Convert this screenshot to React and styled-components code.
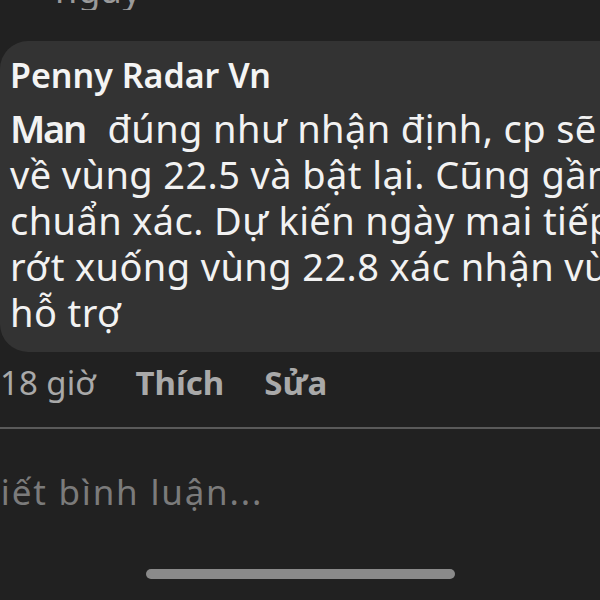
import React from "react";
import styled, { createGlobalStyle } from "styled-components";

const Global = createGlobalStyle`
  html, body { margin: 0; padding: 0; background: #212121; }
  body { width: 600px; height: 600px; overflow: hidden; font-family: "Noto Sans", "DejaVu Sans", sans-serif; }
`;

const Screen = styled.div`
  width: 600px;
  height: 600px;
  overflow: hidden;
  background: #212121;
  display: flex;
  flex-direction: column;
`;

const TopFragment = styled.div`
  height: 10px;
  overflow: hidden;
  margin-bottom: 31px;
`;

const TopText = styled.div`
  font-size: 36px;
  line-height: 40px;
  color: #9a9a9a;
  margin-top: -30px;
  padding-left: 34px;
  letter-spacing: 1px;
  white-space: pre;
`;

const Bubble = styled.div`
  background: #333333;
  border-radius: 28px 0 0 28px;
  padding: 9px 0 17px 10px;
  overflow: hidden;
  margin-right: -200px;
`;

const Name = styled.div`
  font-size: 34px;
  line-height: 59px;
  font-weight: 600;
  color: #f4f4f4;
  margin-top: -4px;
`;

const Line = styled.div`
  font-size: 38px;
  line-height: 46px;
  letter-spacing: 0.4px;
  color: #f2f2f2;
  white-space: pre;
`;

const Strong = styled.span`
  font-weight: 600;
  letter-spacing: -2.3px;
  margin-right: 2px;
`;

const Meta = styled.div`
  display: flex;
  align-items: baseline;
  gap: 40px;
  font-size: 33px;
  line-height: 40px;
  color: #a9a9a9;
  margin-top: 11px;
`;

const Action = styled.span`
  font-weight: 700;
`;

const Divider = styled.div`
  height: 2px;
  background: #5a5a5a;
  margin-top: 24px;
`;

const Placeholder = styled.div`
  font-size: 35px;
  line-height: 40px;
  letter-spacing: 1.8px;
  color: #7b7b7b;
  margin-top: 43px;
  margin-left: -22px;
  white-space: nowrap;
`;

const HomeBar = styled.div`
  width: 309px;
  height: 10px;
  border-radius: 5px;
  background: #8a8a8a;
  align-self: center;
  margin-top: 57px;
`;

export default function App() {
  return (
    <>
      <Global />
      <Screen>
        <TopFragment>
          <TopText>· ngày</TopText>
        </TopFragment>
        <Bubble>
          <Name>Penny Radar Vn</Name>
          <Line><Strong>Man</Strong>  đúng như nhận định, cp sẽ</Line>
          <Line>về vùng 22.5 và bật lại. Cũng gần</Line>
          <Line>chuẩn xác. Dự kiến ngày mai tiếp</Line>
          <Line>rớt xuống vùng 22.8 xác nhận vùng</Line>
          <Line>hỗ trợ</Line>
        </Bubble>
        <Meta>
          <span>18 giờ</span>
          <Action>Thích</Action>
          <Action>Sửa</Action>
        </Meta>
        <Divider />
        <Placeholder>Viết bình luận...</Placeholder>
        <HomeBar />
      </Screen>
    </>
  );
}
